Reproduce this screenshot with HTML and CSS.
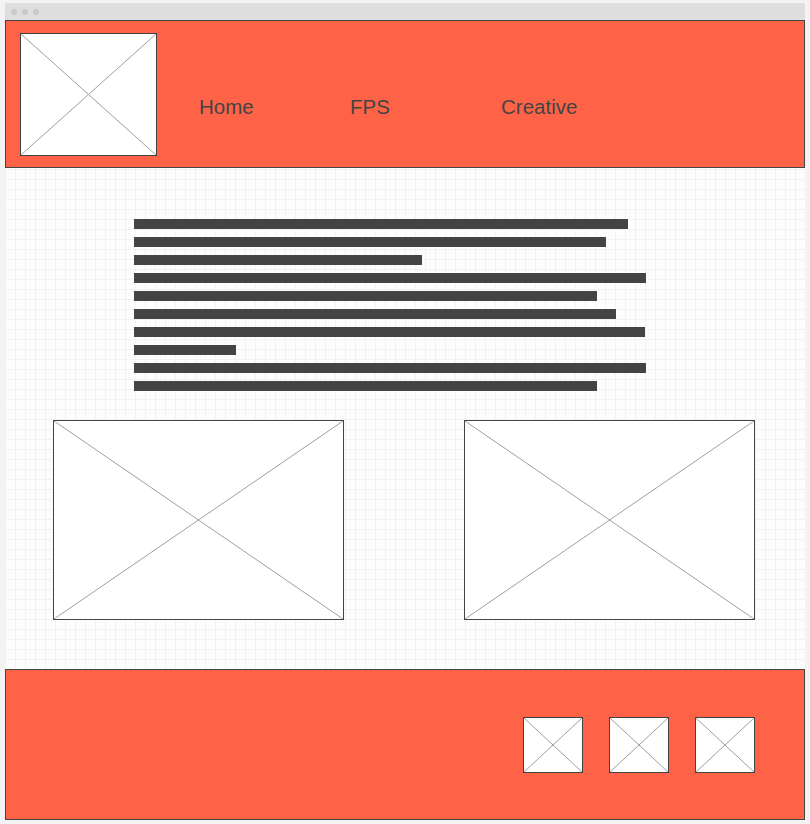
FILE: index.html
```html
<!DOCTYPE html>
<html lang="en">
<head>
    <meta charset="UTF-8">
    <meta name="viewport" content="width=device-width, initial-scale=1.0">
    <title>Wireframe</title>
    <link rel="stylesheet" href="styles.css">
</head>
<body>
    <div class="window">
        <div class="titlebar">
            <span class="dot"></span>
            <span class="dot"></span>
            <span class="dot"></span>
        </div>

        <!-- Header -->
        <header class="header">
            <div class="ph logo">
                <svg viewBox="0 0 100 100" preserveAspectRatio="none"><line x1="0" y1="0" x2="100" y2="100"/><line x1="100" y1="0" x2="0" y2="100"/></svg>
            </div>
            <nav class="nav">
                <a href="#" class="nav-link">Home</a>
                <a href="#" class="nav-link">FPS</a>
                <a href="#" class="nav-link">Creative</a>
            </nav>
        </header>

        <!-- Main content -->
        <main class="content">
            <div class="text-block">
                <div class="bar" style="width: 494px"></div>
                <div class="bar" style="width: 472px"></div>
                <div class="bar" style="width: 288px"></div>
                <div class="bar" style="width: 512px"></div>
                <div class="bar" style="width: 463px"></div>
                <div class="bar" style="width: 482px"></div>
                <div class="bar" style="width: 511px"></div>
                <div class="bar" style="width: 102px"></div>
                <div class="bar" style="width: 512px"></div>
                <div class="bar" style="width: 463px"></div>
            </div>
            <div class="pictures">
                <div class="ph picture">
                    <svg viewBox="0 0 100 100" preserveAspectRatio="none"><line x1="0" y1="0" x2="100" y2="100"/><line x1="100" y1="0" x2="0" y2="100"/></svg>
                </div>
                <div class="ph picture">
                    <svg viewBox="0 0 100 100" preserveAspectRatio="none"><line x1="0" y1="0" x2="100" y2="100"/><line x1="100" y1="0" x2="0" y2="100"/></svg>
                </div>
            </div>
        </main>

        <!-- Footer -->
        <footer class="footer">
            <div class="ph social">
                <svg viewBox="0 0 100 100" preserveAspectRatio="none"><line x1="0" y1="0" x2="100" y2="100"/><line x1="100" y1="0" x2="0" y2="100"/></svg>
            </div>
            <div class="ph social">
                <svg viewBox="0 0 100 100" preserveAspectRatio="none"><line x1="0" y1="0" x2="100" y2="100"/><line x1="100" y1="0" x2="0" y2="100"/></svg>
            </div>
            <div class="ph social">
                <svg viewBox="0 0 100 100" preserveAspectRatio="none"><line x1="0" y1="0" x2="100" y2="100"/><line x1="100" y1="0" x2="0" y2="100"/></svg>
            </div>
        </footer>
    </div>
</body>
</html>
```

FILE: styles.css
```css
/* General Body Styles */
body {
    margin: 0;
    padding: 0;
    background: #f3f3f3;
    font-family: "Liberation Sans", Arial, sans-serif;
}

.window {
    width: 800px;
    margin: 3px 5px 0;
}

/* Browser title bar */
.titlebar {
    height: 17px;
    background: #dedede;
    border-radius: 2px 2px 0 0;
    display: flex;
    align-items: center;
    gap: 5px;
    padding-left: 6px;
}

.dot {
    width: 6px;
    height: 6px;
    border-radius: 50%;
    background: #c9c9c9;
}

/* Placeholder boxes */
.ph {
    box-sizing: border-box;
    border: 1px solid #444;
    background: #ffffff;
}

.ph svg {
    display: block;
    width: 100%;
    height: 100%;
}

.ph line {
    stroke: #9e9e9e;
    stroke-width: 1;
    vector-effect: non-scaling-stroke;
}

/* Header */
.header {
    box-sizing: border-box;
    height: 148px;
    background: #ff6347;
    border: 1px solid #444;
    display: flex;
    align-items: flex-start;
    padding: 12px 0 0 14px;
}

.logo {
    width: 137px;
    height: 123px;
}

.nav {
    display: flex;
    margin: 62px 0 0 42px;
}

.nav-link {
    width: 151px;
    font-size: 20.5px;
    line-height: 23px;
    color: #444;
    text-decoration: none;
}

/* Main content with grid paper */
.content {
    height: 501px;
    box-sizing: border-box;
    padding-top: 51px;
    background-color: #fdfdfd;
    background-image:
        linear-gradient(to right, #f2f2f2 1px, transparent 1px),
        linear-gradient(to bottom, #f2f2f2 1px, transparent 1px);
    background-size: 10px 10px;
    background-position: 0 1px;
}

.text-block {
    display: flex;
    flex-direction: column;
    gap: 8px;
    margin-left: 129px;
}

.bar {
    height: 10px;
    background: #444;
}

.pictures {
    display: flex;
    gap: 120px;
    margin: 29px 0 0 48px;
}

.picture {
    width: 291px;
    height: 200px;
}

/* Footer */
.footer {
    box-sizing: border-box;
    height: 151px;
    background: #ff6347;
    border: 1px solid #444;
    display: flex;
    justify-content: flex-end;
    align-items: flex-start;
    gap: 26px;
    padding: 47px 49px 0 0;
}

.social {
    width: 60px;
    height: 56px;
}
```
